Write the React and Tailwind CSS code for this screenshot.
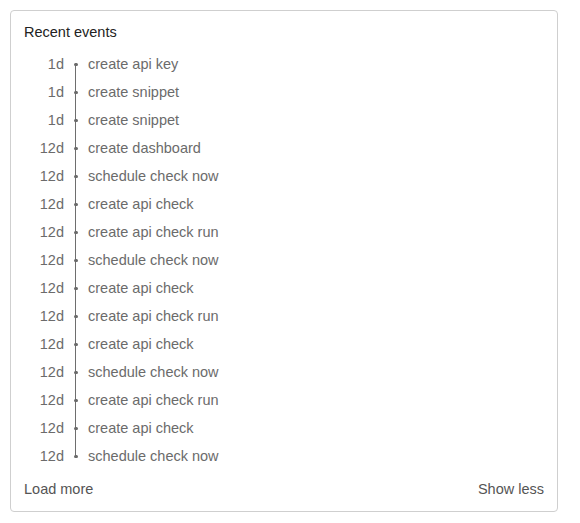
import React from "react";

const events = [
  ["1d", "create api key"],
  ["1d", "create snippet"],
  ["1d", "create snippet"],
  ["12d", "create dashboard"],
  ["12d", "schedule check now"],
  ["12d", "create api check"],
  ["12d", "create api check run"],
  ["12d", "schedule check now"],
  ["12d", "create api check"],
  ["12d", "create api check run"],
  ["12d", "create api check"],
  ["12d", "schedule check now"],
  ["12d", "create api check run"],
  ["12d", "create api check"],
  ["12d", "schedule check now"],
];

export default function App() {
  return (
    <div className="w-[580px] h-[523px] bg-white pt-[10px] pl-[10px]" style={{ fontFamily: '"Liberation Sans", Arial, sans-serif' }}>
      <div className="w-[548px] h-[502px] border border-[#cfcfcf] rounded-[4px] pt-[11px] px-[13px] flex flex-col">
        <div className="text-[14.5px] leading-[20px] text-[#222]">Recent events</div>
        <div className="mt-[8px] flex flex-col">
          {events.map(([t, label], i) => (
            <div key={i} className="flex h-[28px] items-center text-[14.5px] leading-[20px] text-[#6b6b6b]">
              <div className="w-[40px] text-right">{t}</div>
              <div className="relative w-[24px] h-full">
                {i > 0 && <div className="absolute left-[11px] top-0 h-[14px] w-px bg-[#6e6e6e]" />}
                {i < events.length - 1 && <div className="absolute left-[11px] top-[14px] h-[14px] w-px bg-[#6e6e6e]" />}
                <div className="absolute left-[10px] top-[12.5px] w-[3.5px] h-[3.5px] rounded-full bg-[#6a6a6a]" />
              </div>
              <div>{label}</div>
            </div>
          ))}
        </div>
        <div className="mt-[9px] flex justify-between text-[14.5px] leading-[20px] text-[#555]">
          <span>Load more</span>
          <span>Show less</span>
        </div>
      </div>
    </div>
  );
}
